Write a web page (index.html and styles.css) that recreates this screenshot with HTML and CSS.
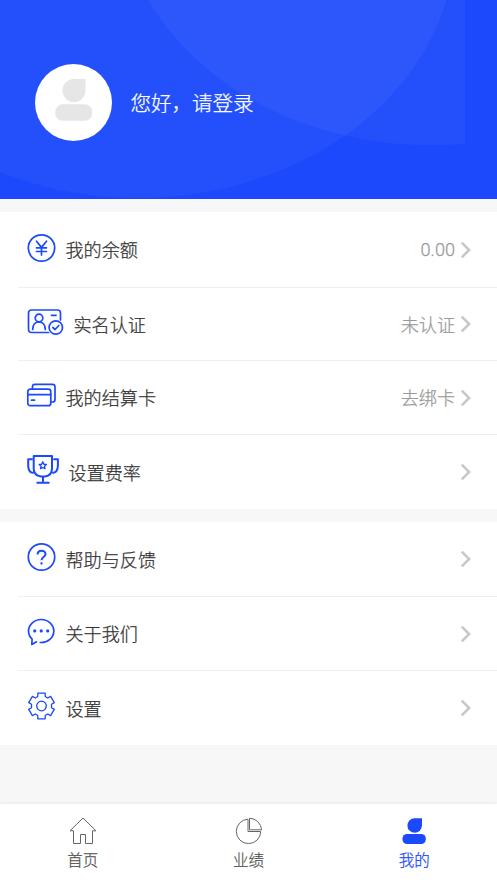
FILE: index.html
```html
<!DOCTYPE html>
<html lang="zh-CN">
<head>
<meta charset="utf-8">
<meta name="viewport" content="width=device-width">
<title>我的</title>
<link rel="stylesheet" href="styles.css">
</head>
<body>
<header class="profile">
  <svg class="backdrop" viewBox="0 0 497 199" aria-hidden="true">
    <ellipse cx="138" cy="-60" rx="317" ry="258"/>
    <path d="M465 0V144Q448 145 430 145A311 255 0 0 1 148 0Z"/>
  </svg>
  <div class="avatar">
    <svg width="38" height="42" viewBox="0 0 38 42"><path d="M19 0H30.5V11.5A11.5 11.5 0 1 1 19 0Z"/><rect x="0.3" y="25.3" width="37" height="16.5" rx="7.5"/></svg>
  </div>
  <span class="greeting">您好，请登录</span>
</header>

<main>
  <section class="group">
    <a class="row">
      <svg class="icon w28" viewBox="0 0 28 28"><circle cx="14" cy="14" r="13.2"/><path d="M9 7.2L14 13.4L19 7.2M14 13.4V21M9 13.8H19M9 17.5H19"/></svg>
      <span class="label">我的余额</span><span class="value num">0.00</span>
      <svg class="arrow" viewBox="0 0 10 18"><path d="M1.3 1.7L8.6 9L1.3 16.3"/></svg>
    </a>
    <a class="row">
      <svg class="icon w36" viewBox="0 0 36 28"><path d="M21 24.5H4A3 3 0 0 1 1 21.500V5A3 3 0 0 1 4 2H30A3 3 0 0 1 33 5V12M24 7.300H28.500"/><circle cx="11.500" cy="10" r="3.800"/><path d="M5.200 21.500C5.200 16.500 8 14 11.500 14S17.800 16.500 17.800 21.500"/><circle cx="28.300" cy="19.500" r="6.700"/><path d="M25.300 19.500L27.600 21.500L31.300 17.500"/></svg>
      <span class="label">实名认证</span><span class="value">未认证</span>
      <svg class="arrow" viewBox="0 0 10 18"><path d="M1.3 1.7L8.6 9L1.3 16.3"/></svg>
    </a>
    <a class="row">
      <svg class="icon w28" viewBox="0 0 28 28"><rect x=".3" y="7.200" width="23" height="16.500" rx="2.500"/><path d="M.5 12.600H23M4 18.200H7M5 7V4.500Q5 2.300 7.200 2.300H25Q27.500 2.300 27.500 4.800V17.500Q27.500 20 25 20H23.500"/></svg>
      <span class="label">我的结算卡</span><span class="value">去绑卡</span>
      <svg class="arrow" viewBox="0 0 10 18"><path d="M1.3 1.7L8.6 9L1.3 16.3"/></svg>
    </a>
    <a class="row">
      <svg class="icon w32 cup" viewBox="0 0 32 30"><path d="M6.700 1H25V13.500Q25 20.500 18 21.500H14Q6.700 20.500 6.700 13.500ZM16 21.500V27.500M9.500 27.800H22.500M5.500 4.300H1.200V10.500Q1.200 17.500 6.500 18M26.300 4.300H30.900V10.500Q30.900 17.500 25.300 18"/><path class="fine" d="M15.800 6.800L16.900 9.200L19.400 9.500L17.500 11.200L18 13.700L15.800 12.500L13.600 13.700L14.100 11.200L12.200 9.500L14.700 9.200Z"/></svg>
      <span class="label">设置费率</span>
      <svg class="arrow" viewBox="0 0 10 18"><path d="M1.3 1.7L8.6 9L1.3 16.3"/></svg>
    </a>
  </section>
  <section class="group">
    <a class="row">
      <svg class="icon w28" viewBox="0 0 28 28"><circle cx="14" cy="14" r="13.2"/><path class="bold" d="M10.100 11.400C10.100 6.500 18 6.500 18 11.200C18 14 14 14.200 14 17.300M14 19.300V21.500"/></svg>
      <span class="label">帮助与反馈</span>
      <svg class="arrow" viewBox="0 0 10 18"><path d="M1.3 1.7L8.6 9L1.3 16.3"/></svg>
    </a>
    <a class="row">
      <svg class="icon w28" viewBox="0 0 28 28"><path d="M12.800 24.500C20.500 24.800 26.300 19.500 26.300 13C26.300 6.500 20.500 1.500 13.700 1.500S1 6.500 1 13C1 16.500 2.600 19.200 4.600 21.200L4.300 26.500L9 23.800"/><path class="dots" d="M7.200 12.900H7.210M13.700 12.900H13.710M20.200 12.900H20.210"/></svg>
      <span class="label">关于我们</span>
      <svg class="arrow" viewBox="0 0 10 18"><path d="M1.3 1.7L8.6 9L1.3 16.3"/></svg>
    </a>
    <a class="row">
      <svg class="icon w28 gear" viewBox="0 0 28 28"><path d="M10.300 1.200H17.700V4.500L20.200 6L23.100 4.400L26.800 10.600L24 12.300V15.700L26.800 17.400L23.100 23.600L20.200 22L17.700 23.500V26.800H10.300V23.500L7.800 22L4.900 23.600L1.200 17.400L4 15.700V12.300L1.200 10.600L4.900 4.400L7.800 6L10.300 4.500Z"/><circle cx="14" cy="14" r="4.800"/></svg>
      <span class="label">设置</span>
      <svg class="arrow" viewBox="0 0 10 18"><path d="M1.3 1.7L8.6 9L1.3 16.3"/></svg>
    </a>
  </section>
</main>

<nav class="tabs">
  <a class="tab"><svg viewBox="0 0 28 28"><path d="M14 1L27 13.800H23.500V26.500H16.500V17.500H11.500V26.500H4.500V13.800H1Z"/></svg><span>首页</span></a>
  <a class="tab"><svg viewBox="0 0 28 28"><path d="M13 2.200A12.200 12.200 0 1 0 25.700 14.500H13ZM14.500 1.200V12.800H26.600A12.500 12.500 0 0 0 14.500 1.200Z"/></svg><span>业绩</span></a>
  <a class="tab active"><svg viewBox="0 0 28 28"><path d="M14.500 1.200H22V8.500A7.300 7.300 0 1 1 14.500 1.200Z"/><rect x="2.500" y="17" width="23.300" height="10" rx="4.600"/></svg><span>我的</span></a>
</nav>
</body>
</html>
```

FILE: styles.css
```css
* { box-sizing: border-box; }
body {
  margin: 0;
  height: 883px;
  display: flex;
  flex-direction: column;
  background: #f7f7f7;
  color: #333;
  font-family: "Noto Sans CJK SC", sans-serif;
  font-weight: 300;
  -webkit-text-stroke: .25px currentColor;
  overflow: hidden;
}
.profile {
  position: relative;
  height: 199px;
  display: flex;
  align-items: center;
  gap: 18.5px;
  padding: 5px 35px 0;
  background: #1b49fb;
}
.backdrop {
  position: absolute;
  inset: 0;
  width: 100%;
  height: 100%;
  fill: rgba(255, 255, 255, .045);
}
.avatar {
  position: relative;
  width: 77px;
  height: 77px;
  border-radius: 50%;
  background: #fff;
  display: flex;
  justify-content: center;
  padding-top: 15px;
}
.avatar svg { fill: #e6e6e6; }
.greeting {
  position: relative;
  color: #fff;
  font-size: 20.5px;
  line-height: 30px;
}
.group { margin-top: 13px; background: #fff; }
.row {
  height: 74px;
  margin-left: 18px;
  padding: 0 26px 0 9px;
  display: flex;
  align-items: center;
  border-bottom: 1px solid #efefef;
}
.row:first-child { height: 75px; }
.group:first-child .row:first-child { height: 76px; }
.group:first-child .row:nth-child(2) { height: 73px; }
.row:last-child { border-bottom: 0; }
.icon {
  flex: none;
  height: 28px;
  margin-top: -4px;
  overflow: visible;
  fill: none;
  stroke: #1b49fb;
  stroke-width: 1.7;
  stroke-linejoin: round;
  stroke-linecap: round;
}
.w28 { width: 29px; }
.w36 { width: 37px; }
.w32 { width: 32px; height: 30px; }
.cup { stroke-width: 2; stroke-linecap: butt; }
.icon .fine { stroke-width: 1.4; }
.icon .bold { stroke-width: 2; stroke-linecap: butt; }
.icon .dots { stroke-width: 3.2; }
.gear { stroke-width: 1.3; }
.label { margin-left: 9.5px; font-size: 18.1px; line-height: 28px; flex: 1; }
.value { color: #999; font-size: 18.1px; line-height: 28px; padding-bottom: 1px; margin-right: 5px; }
.label { padding-bottom: 1px; }
.num { font-family: Roboto, sans-serif; font-weight: 300; padding-bottom: 0; }
.arrow {
  width: 11px;
  height: 18px;
  fill: none;
  stroke: #c7c7cc;
  stroke-width: 2.6;
}
.tabs {
  margin-top: auto;
  height: 79px;
  display: flex;
  background: #fff;
  box-shadow: 0 -1px 3px rgba(0, 0, 0, .06);
}
.tab {
  flex: 1;
  display: flex;
  flex-direction: column;
  align-items: center;
  padding-top: 13px;
  color: #555;
  font-size: 15.5px;
  line-height: 24px;
}
.tab svg { width: 28px; height: 28px; fill: none; stroke: #666; stroke-width: 1; }
.tab span { margin-top: 2px; }
.tab.active { color: #1b49fb; }
.tab.active svg { fill: #1b49fb; stroke: none; }
```
